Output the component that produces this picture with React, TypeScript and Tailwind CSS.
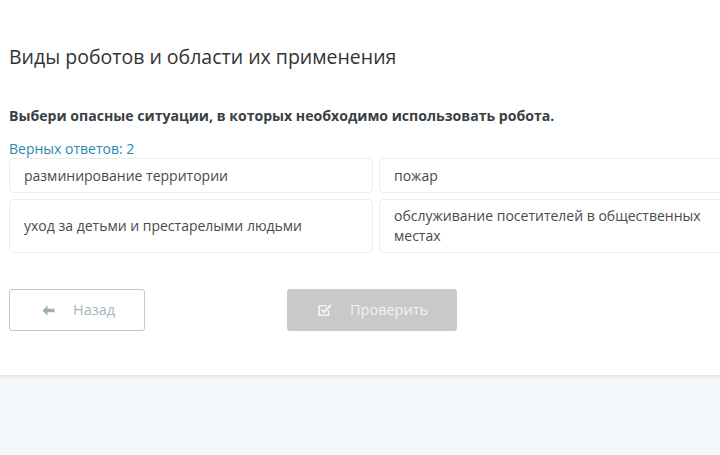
import React from "react";

const options: string[][] = [
  ["разминирование территории", "пожар"],
  ["уход за детьми и престарелыми людьми", "обслуживание посетителей в общественных местах"],
];

function ArrowLeft() {
  return (
    <svg width="13" height="11" viewBox="0 0 13 11" fill="#9bb0bb">
      <path d="M5.5 0.5 L0.5 5.5 L5.5 10.5 L5.5 7.2 L12.5 7.2 L12.5 3.8 L5.5 3.8 Z" />
    </svg>
  );
}

function CheckSquare() {
  return (
    <svg width="15" height="13" viewBox="0 0 15 13" fill="none" stroke="#f4f4f4" strokeWidth="1.6">
      <path d="M10.5 6.5 V11.2 H1 V1.8 H9" />
      <path d="M3.6 5.6 L6 8 L13 1" strokeWidth="2" />
    </svg>
  );
}

export default function App() {
  return (
    <div
      className="w-[720px] h-[455px] overflow-hidden bg-[#f5f8fa] flex flex-col"
      style={{ fontFamily: '"Open Sans", "Noto Sans", sans-serif' }}
    >
      <div className="bg-white h-[376px] shrink-0 pl-[9px] pt-[44px] border-b border-[#e6eaea] shadow-[0_2px_3px_rgba(0,0,0,0.05)]">
        <h1 className="text-[19.5px] leading-[26px] text-[#333] font-normal">
          Виды роботов и области их применения
        </h1>
        <p className="mt-[36px] text-[14.1px] leading-[20px] font-bold text-[#3a3f44]">
          Выбери опасные ситуации, в которых необходимо использовать робота.
        </p>
        <p className="mt-[14px] text-[14px] leading-[18px] text-[#2a8aad]">Верных ответов: 2</p>
        <div className="w-[743px] flex flex-col gap-[6px]">
          {options.map((row, i) => (
            <div key={i} className="grid grid-cols-[364px_364px] gap-[6px]">
              {row.map((t) => (
                <div
                  key={t}
                  className={`border border-[#ebeded] rounded-[5px] bg-white px-[14px] flex items-center text-[14px] leading-[20px] text-[#4a4a4a] ${
                    i === 0 ? "h-[35px]" : "h-[54px]"
                  }`}
                >
                  <span className="pr-[20px]">{t}</span>
                </div>
              ))}
            </div>
          ))}
        </div>
        <div className="mt-[36px] flex">
          <button className="w-[136px] h-[42px] border border-[#b7ccd4] rounded-[3px] bg-white flex items-center pl-[32px] gap-[18px] text-[14.5px] text-[#a5b7c0]">
            <ArrowLeft />
            <span>Назад</span>
          </button>
          <button className="ml-[142px] w-[170px] h-[42px] rounded-[3px] bg-[#c9c9c9] flex items-center pl-[31px] gap-[17px] text-[14.5px] text-[#f2f2f2]">
            <CheckSquare />
            <span>Проверить</span>
          </button>
        </div>
      </div>
    </div>
  );
}
